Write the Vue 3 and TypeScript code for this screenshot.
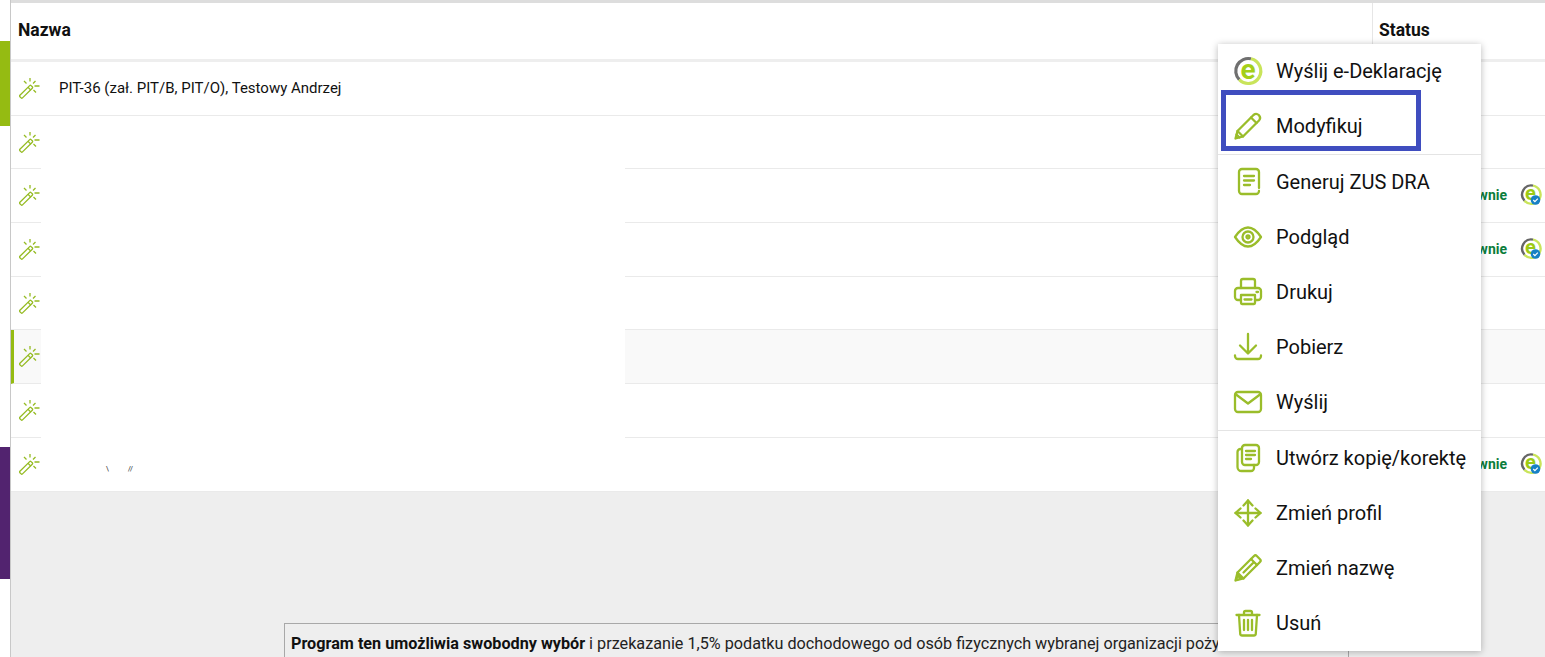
<template>
  <div class="page">
    <aside class="rail">
      <div class="rail-gap"></div>
      <div class="rail-green"></div>
      <div class="rail-mid"></div>
      <div class="rail-purple"></div>
    </aside>

    <main class="content">
      <div class="head">
        <div class="head-name">Nazwa</div>
        <div class="head-status">Status</div>
      </div>

      <div class="rows">
        <div v-for="(r, i) in rows" :key="i" class="row" :class="{ active: r.active }">
          <svg class="wand" viewBox="0 0 22 22">
            <path d="M.9 17.300 10.700 7.600a1 1 0 0 1 1.400 0l1.200 1.200a1 1 0 0 1 0 1.400L3.500 19.900a1 1 0 0 1-1.400 0L.9 18.700a1 1 0 0 1 0-1.400Z" />
            <path d="M9 9.300l2.800 2.800" />
            <path d="M11 0v3.500M5 3l2.500 2.500M16.500 3 14 5.500M15.500 8H20.500M14.500 12l2.500 2.500" />
          </svg>
          <span class="name">{{ r.name }}</span>
          <span v-if="r.sent" class="state">wnie</span>
          <svg v-if="r.sent" class="sent" viewBox="0 0 22 22">
            <path class="arc-grey" d="M13 1.600A9.200 9.200 0 0 0 4.500 16.800" />
            <path class="arc-lime" d="M13 1.600A9.200 9.200 0 1 1 4.500 16.800" />
            <text x="10.500" y="16" class="e">e</text>
            <circle cx="15.500" cy="16" r="4.800" fill="#1780c4" />
            <path d="M13.300 16l1.600 1.600 2.900-3" fill="none" stroke="#fff" stroke-width="1.200" />
          </svg>
        </div>

        <!-- przykrycie danych na liście -->
        <div class="mask">
          <span class="specks"><i>\</i><i>//</i></span>
        </div>
      </div>

      <div class="bottom">
        <div class="notice">
          <b>Program ten umożliwia swobodny wybór</b> i przekazanie 1,5% podatku dochodowego od osób fizycznych wybranej organizacji poży
        </div>
      </div>
    </main>

    <div class="menu">
      <div v-for="it in items" :key="it.label" class="item" :class="{ divided: it.divider }">
        <svg class="ico" viewBox="0 0 28 28">
          <template v-if="it.icon === 'edeklaracja'">
            <path class="e-grey" d="M17 1.800A12.500 12.500 0 0 0 5.300 22.700" />
            <path class="e-lime" d="M17 1.800A12.500 12.500 0 1 1 5.300 22.700" />
            <text x="14" y="21.500" class="e-big">e</text>
          </template>
          <template v-else>
            <path v-for="d in icons[it.icon]" :key="d" :d="d" />
          </template>
        </svg>
        <span class="label">{{ it.label }}</span>
      </div>
    </div>

    <div class="highlight"></div>
  </div>
</template>

<script setup lang="ts">
type Row = { name: string; sent?: boolean; active?: boolean }
type Item = { label: string; icon: string; divider?: boolean }

const rows: Row[] = [
  { name: 'PIT-36 (zał. PIT/B, PIT/O), Testowy Andrzej' },
  { name: '' },
  { name: '', sent: true },
  { name: '', sent: true },
  { name: '' },
  { name: '', active: true },
  { name: '' },
  { name: '', sent: true },
]

const items: Item[] = [
  { label: 'Wyślij e-Deklarację', icon: 'edeklaracja' },
  { label: 'Modyfikuj', icon: 'pencil' },
  { label: 'Generuj ZUS DRA', icon: 'doc', divider: true },
  { label: 'Podgląd', icon: 'eye' },
  { label: 'Drukuj', icon: 'printer' },
  { label: 'Pobierz', icon: 'download' },
  { label: 'Wyślij', icon: 'mail' },
  { label: 'Utwórz kopię/korektę', icon: 'copy', divider: true },
  { label: 'Zmień profil', icon: 'move' },
  { label: 'Zmień nazwę', icon: 'rename' },
  { label: 'Usuń', icon: 'trash' },
]

const icons: Record<string, string[]> = {
  pencil: [
    'M1.500 26.500 3.500 19 19.500 3q2.700-2.300 5.200 0l.3.300q2.300 2.700 0 5.200L9 24.500Z',
    'M17 5.500 22.500 11M3.500 19 9 24.500M2.500 22.500l3 3',
  ],
  doc: [
    'M25 20V4a3 3 0 0 0-3-3H8a3 3 0 0 0-3 3v19a3 3 0 0 0 3 3h14a3 3 0 0 0 3-3',
    'M10 8h10M10 12.500h10M10 17h6',
  ],
  eye: [
    'M1 14C6 6.500 10 4.500 14 4.500S22 6.500 27 14C22 21.500 18 23.500 14 23.500S6 21.500 1 14Z',
    'M14 8.500a5.500 5.500 0 1 0 0 11 5.500 5.500 0 0 0 0-11Z',
    'M14 12.500a1.500 1.500 0 1 0 0 3 1.500 1.500 0 0 0 0-3Z',
  ],
  printer: [
    'M7 10V3a2 2 0 0 1 2-2h10a2 2 0 0 1 2 2v7',
    'M7 22H4a3 3 0 0 1-3-3v-6a3 3 0 0 1 3-3h20a3 3 0 0 1 3 3v6a3 3 0 0 1-3 3h-3',
    'M7 17h14v8a1 1 0 0 1-1 1H8a1 1 0 0 1-1-1Z',
    'M10.500 21.500h7M22.500 14h1.500',
  ],
  download: [
    'M14 1v19M6 12.500l8 8 8-8',
    'M1 22.500v.5a3 3 0 0 0 3 3h20a3 3 0 0 0 3-3v-.5',
  ],
  mail: [
    'M4 4h20a3 3 0 0 1 3 3v14a3 3 0 0 1-3 3H4a3 3 0 0 1-3-3V7a3 3 0 0 1 3-3Z',
    'M2 6.500l12 9 12-9',
  ],
  copy: [
    'M11 1h11a3 3 0 0 1 3 3v14a3 3 0 0 1-3 3H11a3 3 0 0 1-3-3V4a3 3 0 0 1 3-3Z',
    'M8 5H6.500a3 3 0 0 0-3 3v15a4 4 0 0 0 4 4H17a3 3 0 0 0 3-3v-3',
    'M12 7h9M12 11h9M12 15h5',
  ],
  move: [
    'M14 1.500v25M1.500 14h25',
    'M9.500 6.500 14 1.500l4.500 5M9.500 21.500 14 26.500l4.500-5M6.500 9.500 1.500 14l5 4.500M21.500 9.500 26.500 14l-5 4.500',
  ],
  rename: [
    'M1.500 26.500 3.500 18.500 20 2a2 2 0 0 1 2.800 0L26 5.200a2 2 0 0 1 0 2.800L9.500 24.500Z',
    'M9.500 18.500 19 9M17 5 23 11M3.500 18.500 9.500 24.500M2 26 3.500 21.500 6.500 24.500Z',
  ],
  trash: [
    'M2.500 6h23M10 6V3.500a1.500 1.500 0 0 1 1.500-1.500h5A1.500 1.500 0 0 1 18 3.500V6',
    'M5 6l1.200 18.500a2 2 0 0 0 2 2h11.600a2 2 0 0 0 2-2L23 6',
    'M10 11v10M14 11v10M18 11v10',
  ],
}
</script>

<style>
html,
body {
  margin: 0;
  overflow: hidden;
}
</style>

<style scoped>
.page {
  position: relative;
  display: flex;
  width: 1545px;
  height: 657px;
  overflow: hidden;
  background: #fff;
  font-family: Roboto, "Liberation Sans", sans-serif;
  color: #111;
}

.rail {
  flex: 0 0 10px;
  display: flex;
  flex-direction: column;
  border-right: 1px solid #c8c8c8;
}
.rail-gap {
  height: 41px;
}
.rail-green {
  height: 85px;
  background: #95bb12;
}
.rail-mid {
  height: 321px;
}
.rail-purple {
  height: 132px;
  background: #52236f;
}

.content {
  flex: 1;
  display: flex;
  flex-direction: column;
  min-width: 0;
  background: #eee;
}

.head {
  display: flex;
  height: 56px;
  background: #fff;
  border-top: 3px solid #ddd;
  border-bottom: 3px solid #eee;
  font-size: 17.5px;
  font-weight: 700;
  line-height: 55px;
}
.head-name {
  width: 1362px;
  padding-left: 7px;
  box-sizing: border-box;
  border-right: 1px solid #e6e6e6;
}
.head-status {
  padding-left: 6px;
}

.rows {
  position: relative;
  background: #fff;
}
.row {
  display: flex;
  align-items: center;
  height: 53.7px;
  box-sizing: border-box;
  padding-left: 8px;
  padding-bottom: 1px;
  border-bottom: 1px solid #eaeaea;
  font-size: 15px;
}
.row.active {
  background: #f9f9f9;
  border-left: 3px solid #95bb12;
  padding-left: 5px;
}
.wand {
  flex: none;
  width: 22px;
  height: 22px;
  margin-top: 2px;
  fill: none;
  stroke: #95bb22;
  stroke-width: 1.3;
}
.name {
  margin-left: 18px;
  flex: 1;
}
.state {
  margin-right: 13px;
  font-size: 14px;
  font-weight: 700;
  color: #0b7d3c;
  white-space: nowrap;
}
.sent {
  flex: none;
  width: 22px;
  height: 22px;
  margin-right: 3px;
  overflow: visible;
}
.arc-grey {
  fill: none;
  stroke: #666;
  stroke-width: 2.4;
}
.arc-lime {
  fill: none;
  stroke: #c9e45a;
  stroke-width: 2.4;
}
.e {
  font: 700 20px Roboto, sans-serif;
  fill: #9ccb14;
  text-anchor: middle;
}

.mask {
  position: absolute;
  left: 30px;
  top: 54px;
  width: 584px;
  height: 351px;
  background: #fff;
}
.specks {
  position: absolute;
  left: 65px;
  bottom: -6px;
  display: flex;
  gap: 19px;
  font-size: 7px;
  line-height: 8px;
}
.specks i {
  font-style: normal;
}

.bottom {
  flex: 1;
  position: relative;
}
.notice {
  position: absolute;
  left: 273px;
  top: 131px;
  width: 1065px;
  height: 40px;
  box-sizing: border-box;
  padding: 10px 6px;
  border: 1px solid #a8a8a8;
  white-space: nowrap;
  overflow: hidden;
  font-size: 16.2px;
  color: #222;
}
.notice b {
  color: #111;
}

.menu {
  position: absolute;
  left: 1218px;
  top: 44px;
  width: 263px;
  height: 607px;
  display: flex;
  flex-direction: column;
  background: #fff;
  box-shadow: 0 1px 7px rgba(0, 0, 0, 0.28);
}
.item {
  display: flex;
  align-items: center;
  flex: 1;
  padding-left: 16px;
  padding-bottom: 2px;
}
.item.divided {
  border-top: 1px solid #e4e4e4;
}
.ico {
  flex: none;
  width: 28px;
  height: 28px;
  fill: none;
  stroke: #9abd2a;
  stroke-width: 2.3;
  stroke-linecap: round;
  stroke-linejoin: round;
  overflow: visible;
}
.label {
  margin-left: 14px;
  font-size: 20px;
  color: #111;
  white-space: nowrap;
}
.e-grey {
  stroke: #6f6f6f;
  stroke-width: 3.2;
  stroke-linecap: butt;
}
.e-lime {
  stroke: #c9e45a;
  stroke-width: 3.2;
  stroke-linecap: butt;
}
.e-big {
  font: 700 28px Roboto, sans-serif;
  fill: #a4cf18;
  stroke: none;
  text-anchor: middle;
}

.highlight {
  position: absolute;
  left: 1221px;
  top: 90px;
  width: 200px;
  height: 61px;
  box-sizing: border-box;
  border: 5px solid #3f4dbf;
}
</style>
